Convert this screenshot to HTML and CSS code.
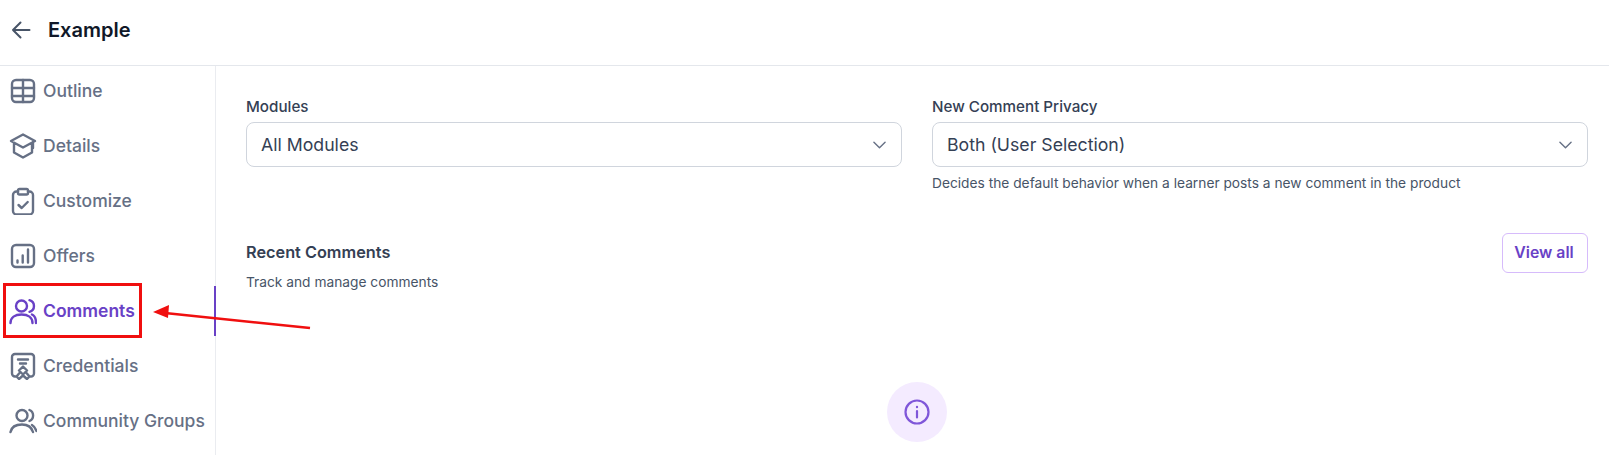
FILE: index.html
```html
<!DOCTYPE html>
<html lang="en">
<head>
<meta charset="utf-8">
<title>Example</title>
<link rel="stylesheet" href="styles.css">
</head>
<body>
<div class="page">
  <header class="topbar">
    <svg class="back" viewBox="0 0 20 18" width="20" height="18"><path d="M18.5 9H2M9.5 1.5 2 9l7.500 7.500"/></svg>
    <h1 class="title">Example</h1>
  </header>
  <div class="body">
    <nav class="sidebar">
      <a class="nav-item"><svg class="ico" viewBox="0 0 28 28"><rect x="3" y="3" width="22" height="22" rx="4"/><path d="M3 11h22M3 19h22M14 3v22"/></svg><span class="nav-text">Outline</span></a>
      <a class="nav-item"><svg class="ico" viewBox="0 0 28 28"><path d="M14 2.500 2 9l12 6.500L26 9zM5 11v9.500l9 5 9-5V11M24 10v6"/></svg><span class="nav-text">Details</span></a>
      <a class="nav-item"><svg class="ico" viewBox="0 0 28 28"><path d="M9 4.500H7.500A3.500 3.500 0 0 0 4 8v16a3.500 3.500 0 0 0 3.500 3.500h13A3.500 3.500 0 0 0 24 24V8a3.500 3.500 0 0 0-3.500-3.500H19"/><rect x="9" y="2" width="10" height="5.500" rx="1.500"/><path d="m9.500 18 3.200 3 6-6"/></svg><span class="nav-text">Customize</span></a>
      <a class="nav-item"><svg class="ico" viewBox="0 0 28 28"><rect x="3" y="3" width="22" height="22" rx="4"/><path d="M8.500 18.500v2M13.700 13.500v7M19 7.500v13"/></svg><span class="nav-text">Offers</span></a>
      <a class="nav-item is-active"><svg class="ico" viewBox="0 0 28 28"><circle cx="12.500" cy="9" r="5.500"/><path d="M1.500 26c0-5.500 4.500-8.500 11-8.500s11 3 11 8.500M20.500 3.200a6 6 0 0 1 0 11.600M23 17.500c2.500 1 4 4 4 8.500"/></svg><span class="nav-text">Comments</span></a>
      <a class="nav-item"><svg class="ico" viewBox="0 0 28 28"><path d="M6.500 24.500H6a3 3 0 0 1-3-3V5a3 3 0 0 1 3-3h16a3 3 0 0 1 3 3v16.500a3 3 0 0 1-3 3h-.5M9 7.500h10M11 11.500h6M14 14.500l4 4-4 4-4-4zM10.500 21l-3 3.500 2.500 2.500 4-3.500 4 3.500 2.500-2.500-3-3.500"/></svg><span class="nav-text">Credentials</span></a>
      <a class="nav-item"><svg class="ico" viewBox="0 0 28 28"><circle cx="13" cy="8.500" r="5.500"/><path d="M1.500 25c1-5 5.500-7.500 11.500-7.500s9.500 2.500 11 7.500M20.500 3a6 6 0 0 1 0 11M23 18c2 1 3.500 3.500 4.500 6"/></svg><span class="nav-text">Community Groups</span></a>
    </nav>
    <main class="main">
      <div class="fields">
        <div class="field">
          <label class="label">Modules</label>
          <div class="select"><span>All Modules</span><svg class="chev" viewBox="0 0 14 8" width="13" height="8"><path d="m1 1 6 6 6-6"/></svg></div>
        </div>
        <div class="field">
          <label class="label">New Comment Privacy</label>
          <div class="select"><span>Both (User Selection)</span><svg class="chev" viewBox="0 0 14 8" width="13" height="8"><path d="m1 1 6 6 6-6"/></svg></div>
          <p class="help">Decides the default behavior when a learner posts a new comment in the product</p>
        </div>
      </div>
      <section class="recent">
        <div>
          <h2 class="recent-title">Recent Comments</h2>
          <p class="recent-sub">Track and manage comments</p>
        </div>
        <button class="view-all">View all</button>
      </section>
      <div class="empty">
        <div class="empty-circle"><svg class="info" viewBox="0 0 26 26" width="26" height="26"><circle cx="13" cy="13" r="11.500"/><path d="M13 12v6.500M13 7.800v.4"/></svg></div>
      </div>
    </main>
  </div>
  <div class="mark"></div>
  <svg class="arrow" viewBox="0 0 163 30" width="163" height="30"><path class="arrow-line" d="M160 26 15 11"/><path class="arrow-head" d="M3 10 19 3l-1 13z"/></svg>
</div>
</body>
</html>
```
FILE: styles.css
```css
* { box-sizing: border-box; }
html, body { margin: 0; padding: 0; height: 100%; overflow: hidden; background: #fff; }
body { font-family: Inter, "Liberation Sans", sans-serif; color: #344054; }
.page { position: relative; height: 455px; overflow: hidden; display: flex; flex-direction: column; }

.topbar { height: 66px; flex: none; display: flex; align-items: center; padding: 0 0 5px 11px; gap: 17px; border-bottom: 1px solid #e4e7ec; }
.back { fill: none; stroke: #475467; stroke-width: 2; stroke-linecap: round; stroke-linejoin: round; }
.title { margin: 0; font-size: 20px; font-weight: 600; line-height: 28px; color: #101828; }

.body { flex: 1; display: flex; min-height: 0; }
.sidebar { width: 216px; flex: none; border-right: 1px solid #eaecf0; display: flex; flex-direction: column; gap: 5px; }
.nav-item { height: 50px; flex: none; display: flex; align-items: center; gap: 6px; padding-left: 9px; font-size: 17.5px; font-weight: 500; color: #667085; white-space: nowrap; }
.nav-text { padding-bottom: 2px; }
.nav-item.is-active { color: #6941c6; font-weight: 600; position: relative; }
.nav-item.is-active::after { content: ""; position: absolute; right: -1px; top: 0; width: 2px; height: 50px; background: #6941c6; }
.ico { width: 28px; height: 28px; flex: none; fill: none; stroke: currentColor; stroke-width: 2.400; stroke-linecap: round; stroke-linejoin: round; }

.main { flex: 1; min-width: 0; padding: 32px 21px 0 30px; }
.fields { display: grid; grid-template-columns: 1fr 1fr; gap: 30px; align-items: start; }
.label { display: block; font-size: 15.200px; font-weight: 500; line-height: 18px; margin-bottom: 6px; color: #344054; }
.select { height: 45px; display: flex; align-items: center; justify-content: space-between; padding: 0 15px 0 14px; border: 1px solid #d0d5dd; border-radius: 8px; font-size: 17.700px; color: #344054; background: #fff; }
.chev { fill: none; stroke: #667085; stroke-width: 1.500; stroke-linecap: round; stroke-linejoin: round; }
.help { margin: 7px 0 0; font-size: 13.750px; line-height: 18px; color: #475467; }

.recent { display: flex; justify-content: space-between; align-items: flex-start; margin-top: 41px; }
.recent-title { margin: 7px 0 0; font-size: 16.300px; font-weight: 600; line-height: 24px; color: #344054; }
.recent-sub { margin: 9px 0 0; font-size: 13.750px; line-height: 18px; color: #475467; }
.view-all { width: 86px; height: 40px; padding: 0 2px 2px 0; border: 1px solid #d6bbfb; border-radius: 6px; background: #fff; font: 600 15.800px Inter, "Liberation Sans", sans-serif; color: #6941c6; }

.empty { display: flex; justify-content: center; margin-top: 91px; }
.empty-circle { width: 60px; height: 60px; border-radius: 50%; background: #f4ebff; display: flex; align-items: center; justify-content: center; }
.info { fill: none; stroke: #7f56d9; stroke-width: 2.200; stroke-linecap: round; }

.mark { position: absolute; left: 3px; top: 283px; width: 139px; height: 55px; border: 3px solid #f00f0f; pointer-events: none; }
.arrow { position: absolute; left: 150px; top: 302px; pointer-events: none; }
.arrow-line { fill: none; stroke: #f00f0f; stroke-width: 2.500; }
.arrow-head { fill: #f00f0f; }
```
